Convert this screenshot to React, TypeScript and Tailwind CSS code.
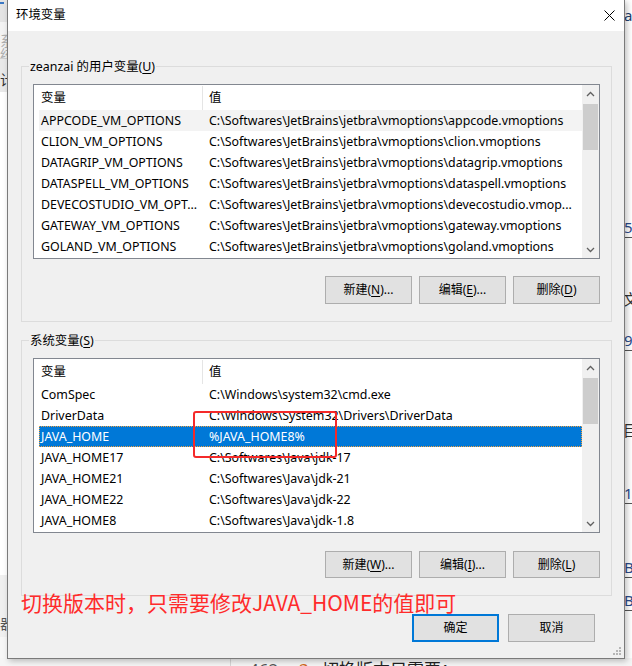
import type { ReactNode } from 'react';

const userVars: [string, string][] = [
  ['APPCODE_VM_OPTIONS', 'C:\\Softwares\\JetBrains\\jetbra\\vmoptions\\appcode.vmoptions'],
  ['CLION_VM_OPTIONS', 'C:\\Softwares\\JetBrains\\jetbra\\vmoptions\\clion.vmoptions'],
  ['DATAGRIP_VM_OPTIONS', 'C:\\Softwares\\JetBrains\\jetbra\\vmoptions\\datagrip.vmoptions'],
  ['DATASPELL_VM_OPTIONS', 'C:\\Softwares\\JetBrains\\jetbra\\vmoptions\\dataspell.vmoptions'],
  ['DEVECOSTUDIO_VM_OPT...', 'C:\\Softwares\\JetBrains\\jetbra\\vmoptions\\devecostudio.vmop...'],
  ['GATEWAY_VM_OPTIONS', 'C:\\Softwares\\JetBrains\\jetbra\\vmoptions\\gateway.vmoptions'],
  ['GOLAND_VM_OPTIONS', 'C:\\Softwares\\JetBrains\\jetbra\\vmoptions\\goland.vmoptions'],
];

const sysVars: [string, string][] = [
  ['ComSpec', 'C:\\Windows\\system32\\cmd.exe'],
  ['DriverData', 'C:\\Windows\\System32\\Drivers\\DriverData'],
  ['JAVA_HOME', '%JAVA_HOME8%'],
  ['JAVA_HOME17', 'C:\\Softwares\\Java\\jdk-17'],
  ['JAVA_HOME21', 'C:\\Softwares\\Java\\jdk-21'],
  ['JAVA_HOME22', 'C:\\Softwares\\Java\\jdk-22'],
  ['JAVA_HOME8', 'C:\\Softwares\\Java\\jdk-1.8'],
];

const Arrow = ({ down }: { down?: boolean }) => (
  <svg width="9" height="6" viewBox="0 0 9 6" className="text-[#606060]">
    <polyline
      points={down ? '1,1 4.5,4.5 8,1' : '1,5 4.5,1.5 8,5'}
      fill="none"
      stroke="currentColor"
      strokeWidth="1.3"
    />
  </svg>
);

const ScrollBar = () => (
  <div className="flex w-[17px] shrink-0 flex-col bg-[#f0f0f0]">
    <div className="flex h-[17px] items-center justify-center">
      <Arrow />
    </div>
    <div className="flex-1 px-[1px] pt-[2px]">
      <div className="h-[46px] bg-[#cdcdcd]" />
    </div>
    <div className="flex h-[17px] items-center justify-center">
      <Arrow down />
    </div>
  </div>
);

interface ListProps {
  rows: [string, string][];
  selected?: number;
  hover?: number;
  children?: ReactNode;
}

const VarList = ({ rows, selected, hover, children }: ListProps) => (
  <div className="relative flex h-[175px] border border-[#828790] bg-white">
    <div className="min-w-0 flex-1 overflow-hidden">
      <div className="flex h-[25px] items-stretch">
        <div className="flex w-[168px] items-center pl-[7px] pt-[1px]">变量</div>
        <div className="mt-[1px] h-[24px] w-px bg-[#e5e5e5]" />
        <div className="flex items-center pl-[6px] pt-[1px]">值</div>
      </div>
      {rows.map(([name, value], i) => (
        <div
          key={name}
          className={`ml-[5px] flex h-[21px] items-center whitespace-nowrap pt-[2px] ${
            i === selected
              ? 'bg-[#0078d7] text-white outline-1 -outline-offset-1 outline-dotted outline-[#f0a040]'
              : i === hover
                ? 'bg-[#f3f3f3]'
                : ''
          }`}
        >
          <div className="w-[163px] shrink-0 overflow-hidden pl-[2px]">{name}</div>
          <div className="pl-[7px]">{value}</div>
        </div>
      ))}
    </div>
    <ScrollBar />
    {children}
  </div>
);

const Btn = ({ children, primary, className = '' }: { children: ReactNode; primary?: boolean; className?: string }) => (
  <button
    className={`flex w-[87px] items-center justify-center bg-[#e1e1e1] text-[12px] text-black ${
      primary ? 'border-2 border-[#0078d7]' : 'border border-[#adadad]'
    } ${className}`}
  >
    {children}
  </button>
);

const Key = ({ k }: { k: string }) => <span className="underline underline-offset-2">{k}</span>;

const GroupBox = ({ label, children }: { label: ReactNode; children: ReactNode }) => (
  <div className="relative h-[256px] border border-[#dcdcdc] px-[11px] pt-[17px]">
    <div className="absolute -top-[9px] left-[7px] bg-[#f0f0f0] px-[1px] leading-[17px]">{label}</div>
    {children}
  </div>
);

export default function App() {
  return (
    <div className="relative h-[666px] w-[632px] overflow-hidden bg-white font-['Noto_Sans','Noto_Sans_CJK_SC',sans-serif] text-[12.4px] text-black">
      {/* window behind, left edge */}
      <div className="absolute left-0 top-0 flex h-full w-[8px] flex-col text-[14px] leading-none">
        <div className="relative h-[22px] bg-[#e4e4e4]">
          <div className="absolute left-0 top-[2px] h-[2px] w-[4px] bg-[#3b78c4]" />
        </div>
        <div className="h-[36px] overflow-hidden bg-[#f3f3f3] pt-[12px] text-[#b0b0b0]">系统</div>
        <div className="h-px bg-[#d0d0d0]" />
        <div className="h-[33px] overflow-hidden bg-[#e9e9e9] pt-[14px] text-[#333]">计</div>
        <div className="flex-1 bg-white" />
        <div className="h-[62px] overflow-hidden bg-[#f0f0f0] pt-[42px] text-[#555]">器</div>
        <div className="h-[29px] bg-[#f7f7f7]" />
      </div>

      {/* window behind, right edge */}
      <div className="absolute right-0 top-0 h-full w-[9px] text-[15px] leading-none text-[#1f3f6e]">
        <div className="absolute left-[1px] top-[8px]">ar</div>
        <div className="absolute left-[1px] top-[220px] border-b border-[#555] pb-[2px] text-[#2a4a8a]">5&nbsp;</div>
        <div className="absolute left-[0px] top-[292px] text-[#333]">文</div>
        <div className="absolute left-[1px] top-[333px] border-b border-[#555] pb-[2px] text-[#2a4a8a]">9&nbsp;</div>
        <div className="absolute left-[0px] top-[423px] text-[#333]">目</div>
        <div className="absolute left-[1px] top-[486px] border-b border-[#555] pb-[2px] text-[#2a4a8a]">1&nbsp;</div>
        <div className="absolute left-[1px] top-[560px] border-b border-[#555] pb-[2px] text-[#2a4a8a]">B&nbsp;</div>
        <div className="absolute left-[1px] top-[593px] border-b border-[#555] pb-[2px] text-[#2a4a8a]">B&nbsp;</div>
      </div>

      {/* window behind, bottom edge */}
      <div className="absolute bottom-0 left-0 h-[8px] w-full bg-[#f5f5f5] text-[17px] leading-none">
        <div className="absolute left-[230px] top-0 h-full w-px bg-[#d6d6d6]" />
        <div className="absolute left-[249px] top-[3px] text-[#555]">462</div>
        <div className="absolute left-[299px] top-[3px] text-[#d2691e]">3</div>
        <div className="absolute left-[322px] top-[3px] text-[#222]">切换版本只需要：</div>
      </div>

      {/* dialog */}
      <div className="relative z-10 ml-[7px] flex w-[618px] flex-col border-x border-b border-[#7a7a7a] bg-[#f0f0f0] shadow-[2px_2px_6px_rgba(0,0,0,0.25)]">
        <div className="flex h-[31px] items-center justify-between bg-white pl-[8px] pr-[9px]">
          <span>环境变量</span>
          <svg width="11" height="11" viewBox="0 0 11 11">
            <path d="M0.5 0.5 L10.5 10.5 M10.5 0.5 L0.5 10.5" stroke="#000" strokeWidth="1" />
          </svg>
        </div>

        <div className="relative flex flex-col pb-[16px] pl-[13px] pr-[12px] pt-[35px]">
          <GroupBox
            label={
              <>
                zeanzai 的用户变量(<Key k="U" />)
              </>
            }
          >
            <VarList rows={userVars} hover={0} />
            <div className="mt-[17px] flex h-[28px] justify-end gap-[7px]">
              <Btn>
                新建(<Key k="N" />)...
              </Btn>
              <Btn>
                编辑(<Key k="E" />)...
              </Btn>
              <Btn>
                删除(<Key k="D" />)
              </Btn>
            </div>
          </GroupBox>

          <div className="mt-[18px]">
            <GroupBox
              label={
                <>
                  系统变量(<Key k="S" />)
                </>
              }
            >
              <VarList rows={sysVars} selected={2}>
                <div className="absolute left-[159px] top-[52px] h-[47px] w-[144px] rounded-[3px] border-2 border-[#f42a2a]" />
              </VarList>
              <div className="mt-[18px] flex h-[27px] justify-end gap-[7px]">
                <Btn>
                  新建(<Key k="W" />)...
                </Btn>
                <Btn>
                  编辑(<Key k="I" />)...
                </Btn>
                <Btn>
                  删除(<Key k="L" />)
                </Btn>
              </div>
            </GroupBox>
          </div>

          <div className="mt-[18px] mr-[17px] flex h-[28px] justify-end gap-[9px]">
            <Btn primary className="w-[86px]">
              确定
            </Btn>
            <Btn>取消</Btn>
          </div>

          <div className="absolute left-[13px] top-[557px] font-['Noto_Sans_CJK_SC',sans-serif] text-[21px] leading-[28px] text-[#ff2b2b]">
            切换版本时，只需要修改JAVA_HOME的值即可
          </div>

          <svg className="absolute bottom-[2px] right-[2px]" width="9" height="9" viewBox="0 0 9 9" fill="#b5b5b5">
            <rect x="6" y="0" width="2" height="2" />
            <rect x="3" y="3" width="2" height="2" />
            <rect x="6" y="3" width="2" height="2" />
            <rect x="0" y="6" width="2" height="2" />
            <rect x="3" y="6" width="2" height="2" />
            <rect x="6" y="6" width="2" height="2" />
          </svg>
        </div>
      </div>
    </div>
  );
}
